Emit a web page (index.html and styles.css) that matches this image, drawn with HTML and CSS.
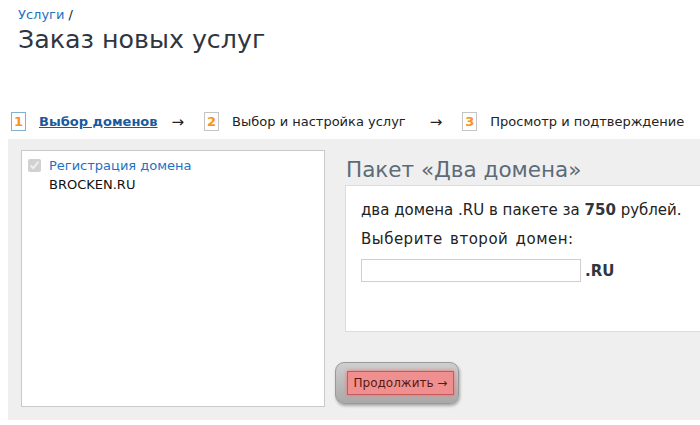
FILE: index.html
```html
<!DOCTYPE html>
<html lang="ru">
<head>
    <meta charset="UTF-8">
    <title>Заказ новых услуг</title>
    <link rel="stylesheet" href="styles.css">
</head>
<body>
    <div class="header">
        <div class="crumbs"><a href="#">Услуги</a> /</div>
        <h1>Заказ новых услуг</h1>
    </div>

    <div class="steps">
        <div class="step active"><span class="num">1</span><a href="#">Выбор доменов</a></div>
        <span class="arrow">→</span>
        <div class="step"><span class="num">2</span>Выбор и настройка услуг</div>
        <span class="arrow wide">→</span>
        <div class="step"><span class="num">3</span>Просмотр и подтверждение</div>
    </div>

    <div class="panel">
        <div class="domains">
            <label class="domain-check">
                <input type="checkbox" checked disabled>
                <span>Регистрация домена</span>
            </label>
            <div class="domain-name">BROCKEN.RU</div>
        </div>
        <div class="package">
            <h2>Пакет «Два домена»</h2>
            <div class="package-box">
                <p>два домена .RU в пакете за <b>750</b> рублей.</p>
                <p class="choose">Выберите второй домен:</p>
                <div class="domain-input">
                    <input type="text">
                    <b>.RU</b>
                </div>
            </div>
            <div class="submit-wrap">
                <button class="submit">Продолжить →</button>
            </div>
        </div>
    </div>
</body>
</html>
```

FILE: styles.css
```css
body {
    margin: 0;
    font-family: "DejaVu Sans", Verdana, sans-serif;
    font-size: 13px;
    color: #222;
    background: #fff;
    width: 700px;
    height: 425px;
    overflow: hidden;
}

a {
    color: #1c72c4;
    text-decoration: none;
}

.header {
    padding: 7px 0 0 18px;
}

.crumbs {
    font-size: 13px;
    line-height: 16px;
}

h1 {
    margin: 0;
    font-size: 25.3px;
    font-weight: normal;
    color: #2f3640;
    line-height: 34px;
}

.steps {
    display: flex;
    align-items: center;
    margin: 54px 0 0 11px;
    height: 20px;
    font-size: 13px;
}

.step {
    display: flex;
    align-items: center;
    color: #222;
}

.num {
    display: inline-block;
    width: 13px;
    height: 17px;
    line-height: 17px;
    text-align: center;
    border: 1px solid #c4c4c4;
    color: #f7941d;
    font-weight: bold;
    margin-right: 13px;
}

.step.active .num {
    border-color: #7fb0d6;
}

.step.active a {
    font-weight: bold;
    text-decoration: underline;
    color: #1a5a9c;
}

.arrow {
    margin: 2px 20px 0 14px;
    font-size: 15px;
}

.arrow.wide {
    margin-left: 24px;
}

.panel {
    display: flex;
    margin: 8px 0 0 8px;
    padding: 11px 0 13px 13px;
    background: #efefef;
    height: 257px;
}

.domains {
    width: 290px;
    padding: 7px 6px;
    background: #fff;
    border: 1px solid #c9c9c9;
    margin-right: 10px;
}

.domain-check {
    display: flex;
    align-items: center;
    color: #1c72c4;
}

.domain-check input {
    margin: 0 8px 0 0;
    width: 13px;
    height: 13px;
}

.domain-name {
    margin: 4px 0 0 21px;
    color: #111;
}

.package {
    flex: 1;
}

.package h2 {
    margin: 5px 0 0 11px;
    font-size: 21.5px;
    font-weight: normal;
    color: #5d6b78;
    line-height: 30px;
}

.package-box {
    margin-left: 10px;
    height: 145px;
    padding: 0 0 0 15px;
    background: #fff;
    border: 1px solid #dcdcdc;
    border-right: none;
    font-size: 15px;
}

.package-box p {
    margin: 15px 0 0;
    line-height: 18px;
}

.package-box p.choose {
    margin-top: 11px;
    letter-spacing: 0.5px;
    word-spacing: 2px;
}

.package-box b {
    color: #2f3640;
}

.domain-input {
    display: flex;
    align-items: center;
    margin-top: 11px;
}

.domain-input input {
    width: 214px;
    height: 19px;
    border: 1px solid #cfcfcf;
    padding: 1px 2px;
    margin: 0 4px 0 0;
}

.submit-wrap {
    display: inline-block;
    margin-top: 30px;
    padding: 8px 4px 8px 11px;
    border-radius: 9px;
    background: linear-gradient(#cfcfcf, #a9a9a9);
    border: 1px solid #999;
    box-shadow: 1px 2px 3px rgba(0, 0, 0, 0.3);
}

.submit {
    display: block;
    width: 107px;
    height: 24px;
    font-family: "DejaVu Sans", Verdana, sans-serif;
    font-size: 12px;
    color: #5a1a10;
    background: #f08f8f;
    border: 1px solid #c45a5a;
    box-shadow: 0 0 4px #f07070;
    padding: 0;
    cursor: pointer;
}
```
